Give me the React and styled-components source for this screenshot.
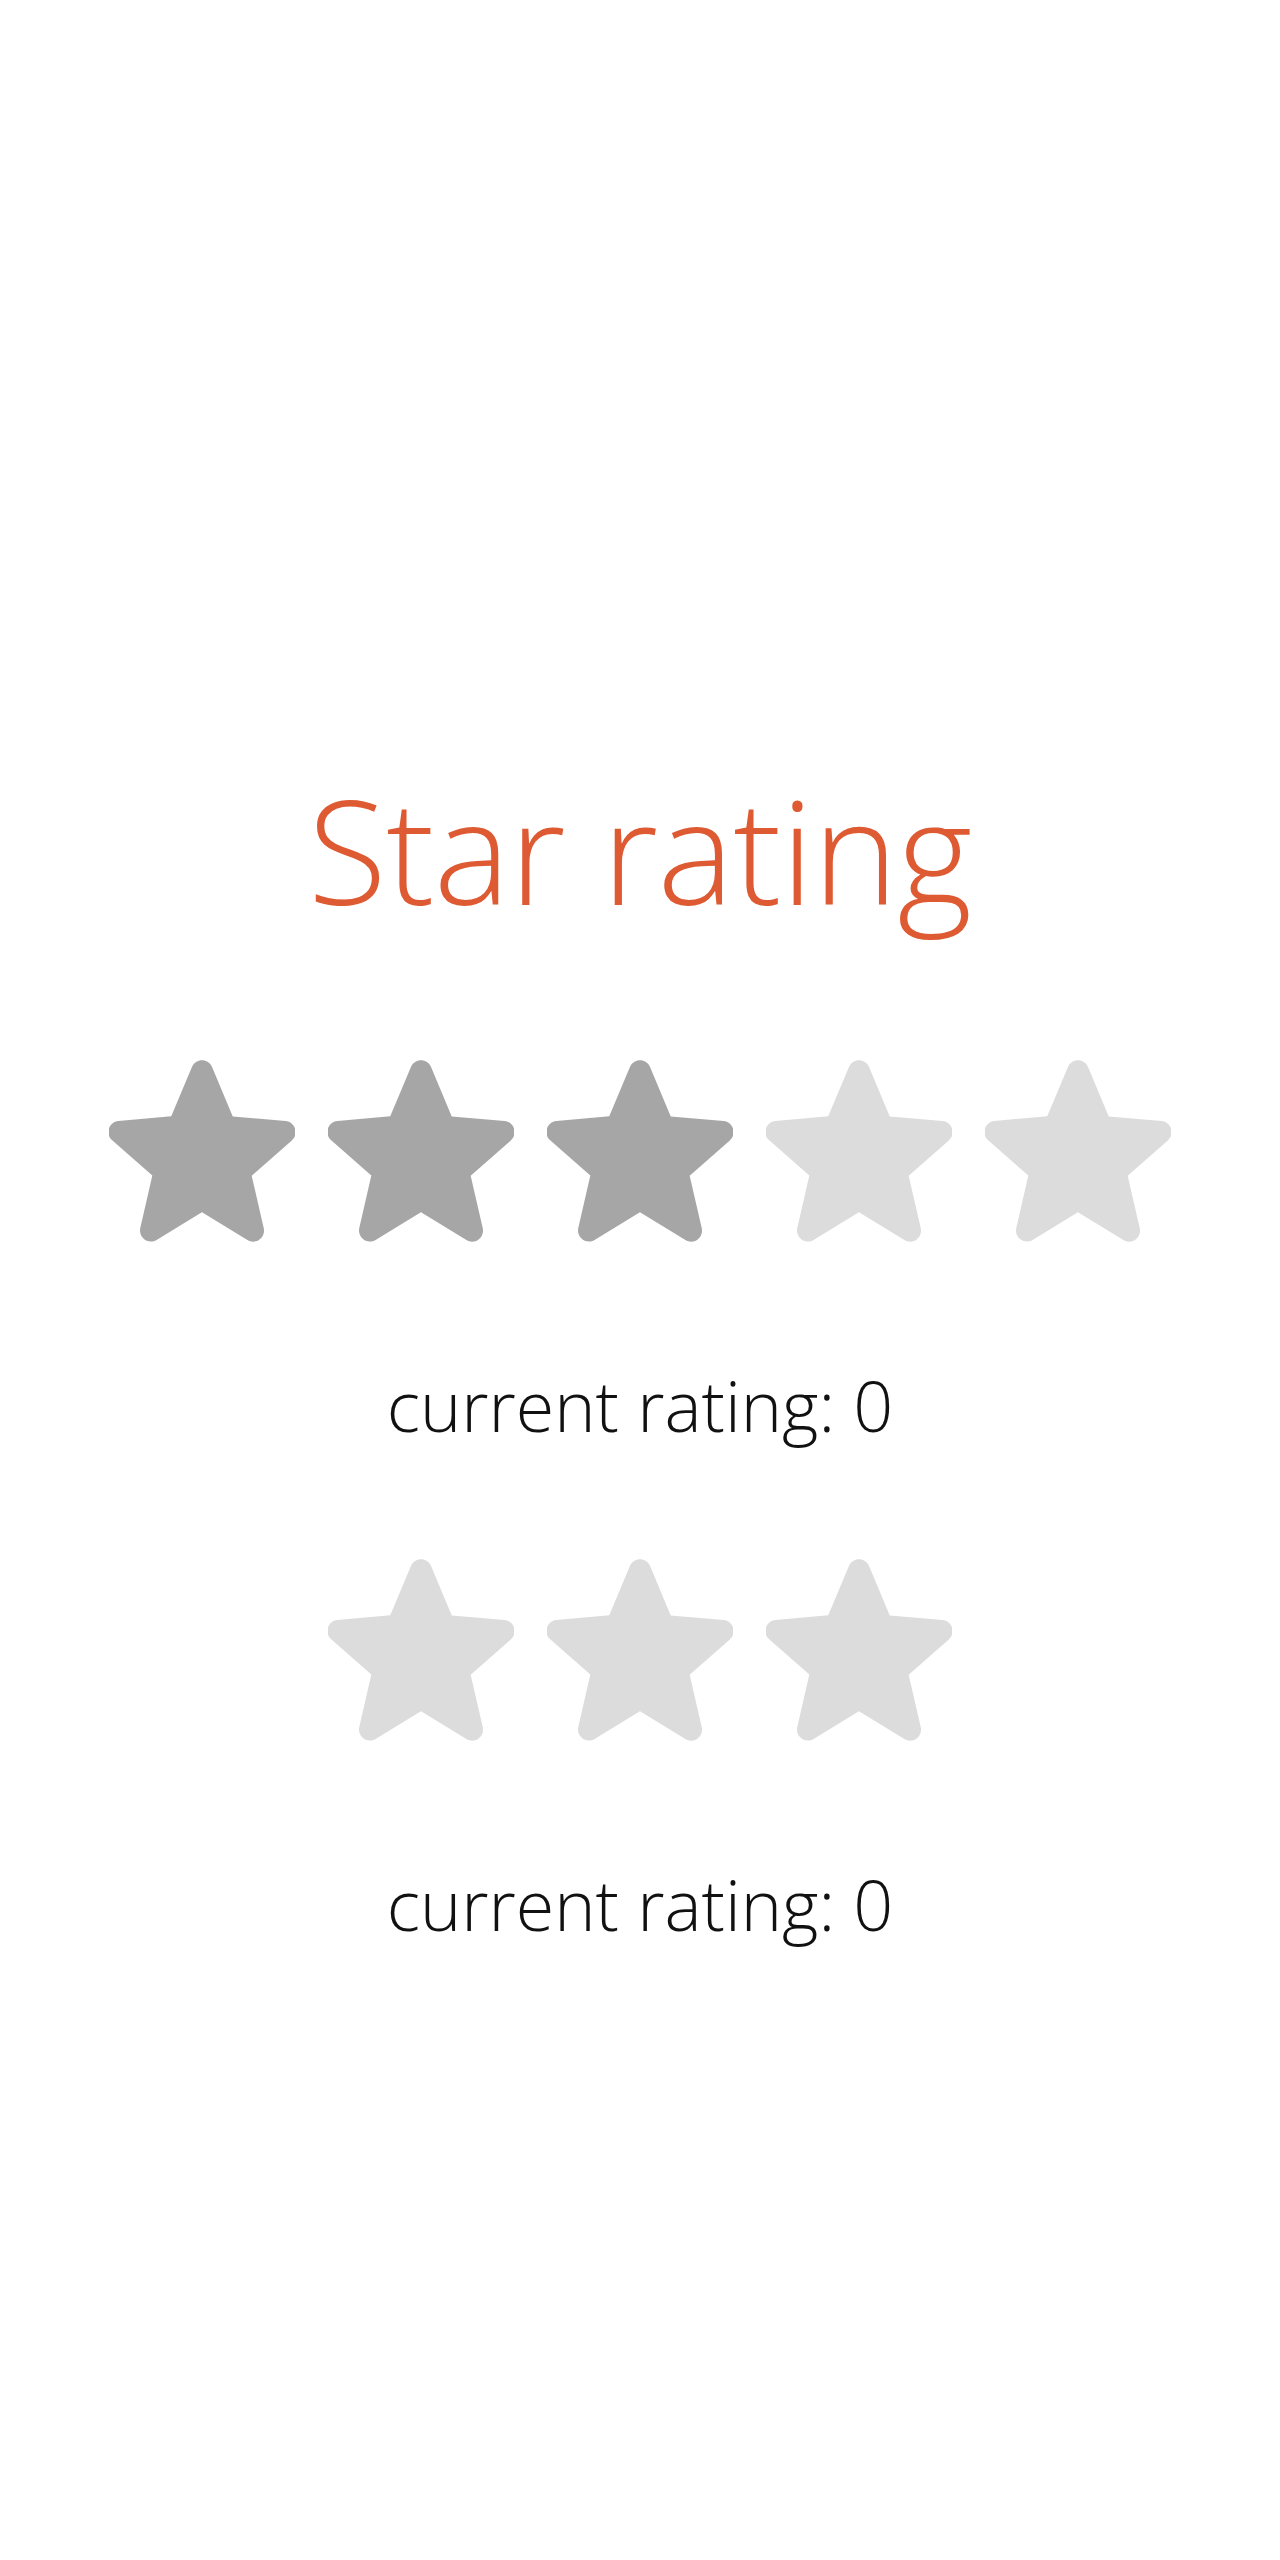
import React from 'react';
import styled, { createGlobalStyle } from 'styled-components';

const GlobalStyle = createGlobalStyle`
    body {
        margin: 0;
        background: #ffffff;
        font-family: 'Open Sans', 'Liberation Sans', sans-serif;
    }
`;

// 전체 페이지, 가운데 정렬
const Page = styled.div`
    display: flex;
    flex-direction: column;
    align-items: center;
    padding-top: 777px;
    min-height: 2560px;
    box-sizing: border-box;
`;

// 제목
const Title = styled.h1`
    margin: 0 0 139px;
    font-size: 144px;
    line-height: 1;
    font-weight: 300;
    letter-spacing: -0.5px;
    color: #de5a33;
`;

// 별점 묶음
const RatingBlock = styled.section`
    display: flex;
    flex-direction: column;
    align-items: center;
    margin-bottom: 119px;
`;

// 별 한 줄
const StarRow = styled.div`
    display: flex;
    flex-direction: row;
    gap: 33px;
`;

const StarButton = styled.span`
    display: block;
    width: 186px;
    height: 183px;
    cursor: pointer;

    svg {
        display: block;
        width: 100%;
        height: 100%;
        fill: ${props => (props.$filled ? '#a6a6a6' : '#dcdcdc')};
    }
`;

// 현재 점수
const Caption = styled.p`
    margin: 127px 0 0;
    font-size: 70px;
    line-height: 1;
    font-weight: 300;
    color: #111111;
`;

const StarIcon = () => (
    <svg viewBox="3.5 3.55 17 16.5" preserveAspectRatio="none">
        <path d="M12 17.27l4.15 2.51c.76.46 1.69-.22 1.49-1.08l-1.1-4.72 3.67-3.18c.67-.58.31-1.68-.57-1.75l-4.83-.41-1.89-4.46c-.34-.81-1.5-.81-1.84 0L9.19 8.63l-4.83.41c-.88.07-1.24 1.17-.57 1.75l3.67 3.18-1.1 4.72c-.2.86.73 1.54 1.49 1.08l4.14-2.5z" />
    </svg>
);

const Rating = ({ count, filled, value }) => (
    <RatingBlock>
        <StarRow>
            {Array.from({ length: count }).map((_, i) => (
                <StarButton key={i} $filled={i < filled}>
                    <StarIcon />
                </StarButton>
            ))}
        </StarRow>
        <Caption>current rating: {value}</Caption>
    </RatingBlock>
);

const App = () => (
    <>
        <GlobalStyle />
        <Page>
            <Title>Star rating</Title>
            <Rating count={5} filled={3} value={0} />
            <Rating count={3} filled={0} value={0} />
        </Page>
    </>
);

export default App;
